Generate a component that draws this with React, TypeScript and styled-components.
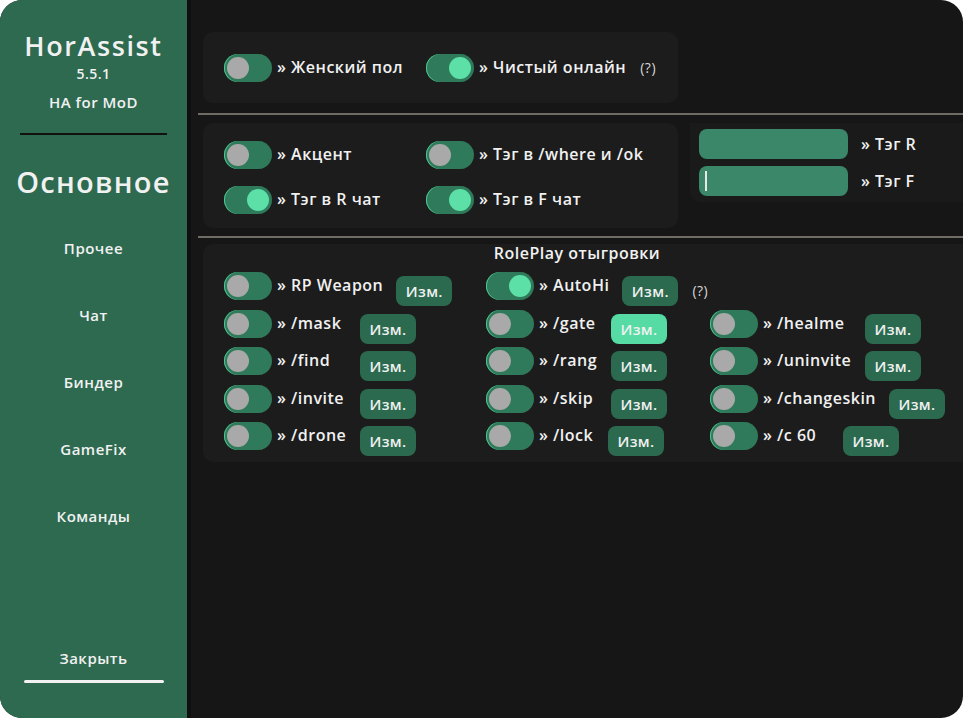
import React from 'react';
import styled, { createGlobalStyle } from 'styled-components';

const GlobalStyle = createGlobalStyle`
  html, body {
    margin: 0;
    padding: 0;
    background: #ffffff;
  }
  * {
    box-sizing: border-box;
  }
`;

const colors = {
  sidebar: '#2d6a50',
  main: '#161616',
  card: '#1c1c1c',
  track: '#2f7a5a',
  knobOff: '#a9a9a9',
  knobOn: '#5ce0a7',
  button: '#2b6a4f',
  buttonHot: '#55dba3',
  input: '#3a8769',
  text: '#f1f1f1',
  divider: '#6f6b65',
};

const font = `'Open Sans', 'Lato', sans-serif`;

const Window = styled.div`
  display: flex;
  width: 963px;
  height: 718px;
  border-radius: 22px;
  overflow: hidden;
  background: ${colors.main};
  font-family: ${font};
  color: ${colors.text};
`;

const Sidebar = styled.div`
  display: flex;
  flex-direction: column;
  align-items: center;
  width: 191px;
  padding-bottom: 35px;
  background: ${colors.sidebar};
  border-right: 4px solid #0f0f0f;
`;

const Brand = styled.div`
  margin-top: 31px;
  font-size: 27px;
  line-height: 30px;
  font-weight: 600;
  letter-spacing: 1.6px;
`;

const Version = styled.div`
  margin-top: 5px;
  font-size: 14px;
  line-height: 16px;
  font-weight: 600;
  letter-spacing: 0.5px;
`;

const SubBrand = styled.div`
  margin-top: 10px;
  font-size: 15px;
  line-height: 20px;
  font-weight: 600;
  letter-spacing: 0.5px;
`;

const SideRule = styled.div`
  width: 147px;
  height: 2px;
  margin-top: 21px;
  background: #111111;
`;

const Current = styled.div`
  margin-top: 30px;
  font-size: 29px;
  line-height: 34px;
  font-weight: 600;
  letter-spacing: 1.3px;
`;

const NavList = styled.div`
  display: flex;
  flex-direction: column;
  align-items: center;
  gap: 47px;
  margin-top: 39px;
`;

const NavItem = styled.div`
  font-size: 15px;
  line-height: 20px;
  font-weight: 600;
  letter-spacing: 0.5px;
`;

const Close = styled.div`
  margin-top: auto;
  font-size: 15px;
  line-height: 20px;
  font-weight: 600;
  letter-spacing: 0.5px;
`;

const CloseRule = styled.div`
  width: 140px;
  height: 3px;
  margin-top: 12px;
  background: #f2f2f2;
  border-radius: 2px;
`;

const Main = styled.div`
  display: flex;
  flex-direction: column;
  flex: 1;
  padding: 32px 0 0 12px;
`;

const Card = styled.div<{ $width: number; $height: number; $padTop?: number }>`
  display: flex;
  flex-direction: column;
  justify-content: center;
  width: ${({ $width }) => $width}px;
  height: ${({ $height }) => $height}px;
  padding: ${({ $padTop }) => $padTop ?? 0}px 0 0 21px;
  background: ${colors.card};
  border-radius: 10px;
`;

const Divider = styled.div<{ $top: number; $bottom: number }>`
  height: 2px;
  margin: ${({ $top, $bottom }) => `${$top}px 0 ${$bottom}px -5px`};
  background: ${colors.divider};
`;

const Row = styled.div`
  display: flex;
  align-items: center;
`;

const TopRow = styled(Row)`
  align-items: flex-start;
`;

const SecondRow = styled(Row)`
  margin-top: 17px;
`;

const Cell = styled.div<{ $width?: number }>`
  display: flex;
  align-items: flex-start;
  ${({ $width }) => ($width ? `width: ${$width}px;` : '')}
`;

const Track = styled.div`
  position: relative;
  flex-shrink: 0;
  width: 48px;
  height: 28px;
  border-radius: 14px;
  background: ${colors.track};
  box-shadow: inset 1px 0 0 #4cc993;
`;

const Knob = styled.div<{ $on: boolean }>`
  position: absolute;
  top: 3px;
  left: ${({ $on }) => ($on ? '23px' : '3px')};
  width: 22px;
  height: 22px;
  border-radius: 50%;
  background: ${({ $on }) => ($on ? colors.knobOn : colors.knobOff)};
`;

const Label = styled.div<{ $min?: number }>`
  margin-left: 5px;
  font-size: 16px;
  line-height: 27px;
  font-weight: 600;
  letter-spacing: 0.5px;
  white-space: nowrap;
  ${({ $min }) => ($min ? `min-width: ${$min}px;` : '')}
`;

const Hint = styled.div<{ $left: number; $top?: number }>`
  margin-left: ${({ $left }) => $left}px;
  margin-top: ${({ $top }) => $top ?? 0}px;
  font-size: 14px;
  line-height: 27px;
  font-weight: 400;
  letter-spacing: 0.5px;
  color: #d8d8d8;
`;

const EditButton = styled.div<{ $hot?: boolean }>`
  display: flex;
  align-items: center;
  justify-content: center;
  flex-shrink: 0;
  width: 56px;
  height: 30px;
  margin: 4px 0 0 13px;
  border-radius: 8px;
  background: ${({ $hot }) => ($hot ? colors.buttonHot : colors.button)};
  font-size: 15px;
  font-weight: 600;
  letter-spacing: 0.4px;
`;

const TagCard = styled.div`
  display: flex;
  flex-direction: column;
  gap: 7px;
  width: 273px;
  height: 79px;
  margin-left: 12px;
  padding: 6px 0 0 9px;
  background: #1a1a1a;
  border-radius: 0 0 0 10px;
`;

const TagInput = styled.div`
  display: flex;
  align-items: center;
  width: 149px;
  height: 30px;
  padding-left: 6px;
  border-radius: 8px;
  background: ${colors.input};
`;

const Caret = styled.div`
  width: 2px;
  height: 20px;
  background: #e8e8e8;
`;

const TagLabel = styled.div`
  margin-left: 13px;
  font-size: 16px;
  font-weight: 600;
  letter-spacing: 0.5px;
`;

const RpCard = styled.div`
  display: flex;
  flex-direction: column;
  height: 218px;
  padding: 0 0 0 21px;
  background: ${colors.card};
  border-radius: 10px 0 0 10px;
`;

const RpTitle = styled.div`
  margin: 0 0 10px -33px;
  text-align: center;
  font-size: 16px;
  line-height: 18px;
  font-weight: 600;
  letter-spacing: 0.5px;
`;

const RpGrid = styled.div`
  display: grid;
  grid-template-columns: 262px 224px 1fr;
  grid-auto-rows: 37.5px;
`;

const Toggle = ({ on }: { on: boolean }) => (
  <Track>
    <Knob $on={on} />
  </Track>
);

type RpItem = { label: string; on?: boolean; hot?: boolean; min: number; hint?: boolean } | null;

const rpRows: RpItem[][] = [
  [
    { label: '» RP Weapon', min: 70 },
    { label: '» AutoHi', on: true, min: 59, hint: true },
    null,
  ],
  [
    { label: '» /mask', min: 70 },
    { label: '» /gate', hot: true, min: 59 },
    { label: '» /healme', min: 89 },
  ],
  [
    { label: '» /find', min: 70 },
    { label: '» /rang', min: 59 },
    { label: '» /uninvite', min: 89 },
  ],
  [
    { label: '» /invite', min: 70 },
    { label: '» /skip', min: 59 },
    { label: '» /changeskin', min: 89 },
  ],
  [
    { label: '» /drone', min: 70 },
    { label: '» /lock', min: 56 },
    { label: '» /c 60', min: 67 },
  ],
];

const navItems = ['Прочее', 'Чат', 'Биндер', 'GameFix', 'Команды'];

const App = () => (
  <>
    <GlobalStyle />
    <Window>
      <Sidebar>
        <Brand>HorAssist</Brand>
        <Version>5.5.1</Version>
        <SubBrand>HA for MoD</SubBrand>
        <SideRule />
        <Current>Основное</Current>
        <NavList>
          {navItems.map((item) => (
            <NavItem key={item}>{item}</NavItem>
          ))}
        </NavList>
        <Close>Закрыть</Close>
        <CloseRule />
      </Sidebar>

      <Main>
        <Card $width={475} $height={71}>
          <Row>
            <Cell $width={202}>
              <Toggle on={false} />
              <Label>» Женский пол</Label>
            </Cell>
            <Cell>
              <Toggle on />
              <Label>» Чистый онлайн</Label>
              <Hint $left={14}>(?)</Hint>
            </Cell>
          </Row>
        </Card>

        <Divider $top={10} $bottom={8} />

        <TopRow>
          <Card $width={475} $height={105} $padTop={4}>
            <Row>
              <Cell $width={202}>
                <Toggle on={false} />
                <Label>» Акцент</Label>
              </Cell>
              <Cell>
                <Toggle on={false} />
                <Label>» Тэг в /where и /ok</Label>
              </Cell>
            </Row>
            <SecondRow>
              <Cell $width={202}>
                <Toggle on />
                <Label>» Тэг в R чат</Label>
              </Cell>
              <Cell>
                <Toggle on />
                <Label>» Тэг в F чат</Label>
              </Cell>
            </SecondRow>
          </Card>
          <TagCard>
            <Row>
              <TagInput />
              <TagLabel>» Тэг R</TagLabel>
            </Row>
            <Row>
              <TagInput>
                <Caret />
              </TagInput>
              <TagLabel>» Тэг F</TagLabel>
            </Row>
          </TagCard>
        </TopRow>

        <Divider $top={8} $bottom={6} />

        <RpCard>
          <RpTitle>RolePlay отыгровки</RpTitle>
          <RpGrid>
            {rpRows.flatMap((row, r) =>
              row.map((item, c) =>
                item ? (
                  <Cell key={`${r}-${c}`}>
                    <Toggle on={!!item.on} />
                    <Label $min={item.min}>{item.label}</Label>
                    <EditButton $hot={item.hot}>Изм.</EditButton>
                    {item.hint && <Hint $left={14} $top={5}>(?)</Hint>}
                  </Cell>
                ) : (
                  <div key={`${r}-${c}`} />
                ),
              ),
            )}
          </RpGrid>
        </RpCard>
      </Main>
    </Window>
  </>
);

export default App;
